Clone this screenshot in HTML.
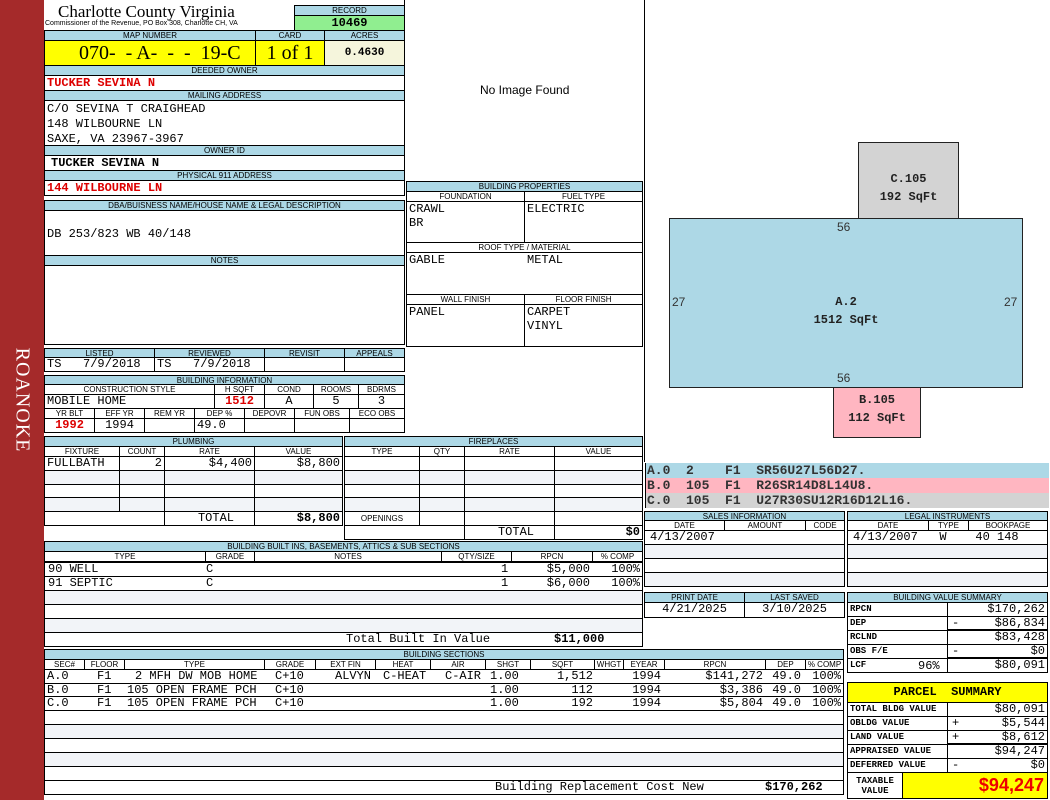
<!DOCTYPE html>
<html><head><meta charset="utf-8"><style>
*{margin:0;padding:0}
body{width:1050px;height:800px;position:relative;background:#fff;overflow:hidden;font-family:"Liberation Mono",monospace}
.b{position:absolute;box-sizing:border-box;border:1px solid #000;overflow:hidden;white-space:nowrap}
.h{background:#add8e6;font:8px/9px "Liberation Sans",sans-serif;text-align:center;color:#000}
.v{background:#fff;font:12px/13px "Liberation Mono",monospace;padding:0 2px;color:#000}
.g{background:#f2f4f8}
.r{text-align:right}
.c{text-align:center}
.t{position:absolute;white-space:nowrap}
.red{color:#d00;font-weight:bold}
.bd{font-weight:bold}
.s span{position:absolute;white-space:nowrap}
</style></head><body>
<div class="t" style="left:0;top:0;width:44px;height:800px;background:#a52a2a"></div>
<div class="t" style="left:22px;top:400px;transform:translate(-50%,-50%) rotate(90deg);color:#fff;font:20px 'Liberation Serif',serif;letter-spacing:1px">ROANOKE</div>

<div class="t" style="left:58px;top:2px;font:17px/19px 'Liberation Serif',serif">Charlotte County Virginia</div>
<div class="t" style="left:45px;top:20px;font:7px/8px 'Liberation Sans',sans-serif">Commissioner of the Revenue, PO Box 308, Charlotte CH, VA</div>
<div class="b h" style="left:294px;top:5px;width:111px;height:11px">RECORD</div>
<div class="b" style="left:294px;top:15px;width:111px;height:16px;background:#90ee90;font:bold 12px/14px 'Liberation Mono';text-align:center">10469</div>
<div class="b h" style="left:44px;top:30px;width:212px;height:11px">MAP NUMBER</div>
<div class="b h" style="left:255px;top:30px;width:70px;height:11px">CARD</div>
<div class="b h" style="left:324px;top:30px;width:81px;height:11px">ACRES</div>
<div class="b" style="left:44px;top:40px;width:212px;height:26px;background:#ff0;font:20px/24px 'Liberation Serif',serif;padding-left:34px">070- &nbsp;- A- &nbsp;- &nbsp;- &nbsp;19-C</div>
<div class="b" style="left:255px;top:40px;width:70px;height:26px;background:#ff0;font:20px/24px 'Liberation Serif',serif;text-align:center">1 of 1</div>
<div class="b" style="left:324px;top:40px;width:81px;height:26px;background:#f5f5dc;font:bold 11px/24px 'Liberation Mono';text-align:center">0.4630</div>

<div class="b h" style="left:44px;top:65px;width:361px;height:11px">DEEDED OWNER</div>
<div class="b v red" style="left:44px;top:75px;width:361px;height:16px;line-height:15px">TUCKER SEVINA N</div>
<div class="b h" style="left:44px;top:90px;width:361px;height:11px">MAILING ADDRESS</div>
<div class="b v" style="left:44px;top:100px;width:361px;height:46px;line-height:15px;padding-top:1px">C/O SEVINA T CRAIGHEAD<br>148 WILBOURNE LN<br>SAXE, VA 23967-3967</div>
<div class="b h" style="left:44px;top:145px;width:361px;height:11px">OWNER ID</div>
<div class="b v bd" style="left:44px;top:155px;width:361px;height:16px;padding-left:6px;line-height:15px">TUCKER SEVINA N</div>
<div class="b h" style="left:44px;top:170px;width:361px;height:11px">PHYSICAL 911 ADDRESS</div>
<div class="b v red" style="left:44px;top:180px;width:361px;height:16px;line-height:15px">144 WILBOURNE LN</div>
<div class="b h" style="left:44px;top:200px;width:361px;height:11px">DBA/BUISNESS NAME/HOUSE NAME &amp; LEGAL DESCRIPTION</div>
<div class="b v" style="left:44px;top:210px;width:361px;height:46px;line-height:46px">DB 253/823 WB 40/148</div>
<div class="b h" style="left:44px;top:255px;width:361px;height:11px">NOTES</div>
<div class="b v" style="left:44px;top:265px;width:361px;height:80px"></div>

<div class="b h" style="left:44px;top:348px;width:111px;height:10px">LISTED</div>
<div class="b h" style="left:154px;top:348px;width:111px;height:10px">REVIEWED</div>
<div class="b h" style="left:264px;top:348px;width:81px;height:10px">REVISIT</div>
<div class="b h" style="left:344px;top:348px;width:61px;height:10px">APPEALS</div>
<div class="b v" style="left:44px;top:357px;width:111px;height:15px">TS &nbsp;&nbsp;7/9/2018</div>
<div class="b v" style="left:154px;top:357px;width:111px;height:15px">TS &nbsp;&nbsp;7/9/2018</div>
<div class="b v" style="left:264px;top:357px;width:81px;height:15px"></div>
<div class="b v" style="left:344px;top:357px;width:61px;height:15px"></div>

<div class="b h" style="left:44px;top:375px;width:361px;height:10px">BUILDING INFORMATION</div>
<div class="b h" style="left:44px;top:384px;width:171px;height:11px;background:#fff">CONSTRUCTION STYLE</div>
<div class="b h" style="left:214px;top:384px;width:51px;height:11px;background:#fff">H SQFT</div>
<div class="b h" style="left:264px;top:384px;width:50px;height:11px;background:#fff">COND</div>
<div class="b h" style="left:313px;top:384px;width:46px;height:11px;background:#fff">ROOMS</div>
<div class="b h" style="left:358px;top:384px;width:47px;height:11px;background:#fff">BDRMS</div>
<div class="b v" style="left:44px;top:394px;width:171px;height:15px">MOBILE HOME</div>
<div class="b v red c" style="left:214px;top:394px;width:51px;height:15px">1512</div>
<div class="b v c" style="left:264px;top:394px;width:50px;height:15px">A</div>
<div class="b v c" style="left:313px;top:394px;width:46px;height:15px">5</div>
<div class="b v c" style="left:358px;top:394px;width:47px;height:15px">3</div>
<div class="b h" style="left:44px;top:408px;width:51px;height:11px;background:#fff">YR BLT</div>
<div class="b h" style="left:94px;top:408px;width:51px;height:11px;background:#fff">EFF YR</div>
<div class="b h" style="left:144px;top:408px;width:51px;height:11px;background:#fff">REM YR</div>
<div class="b h" style="left:194px;top:408px;width:51px;height:11px;background:#fff">DEP %</div>
<div class="b h" style="left:244px;top:408px;width:51px;height:11px;background:#fff">DEPOVR</div>
<div class="b h" style="left:294px;top:408px;width:56px;height:11px;background:#fff">FUN OBS</div>
<div class="b h" style="left:349px;top:408px;width:56px;height:11px;background:#fff">ECO OBS</div>
<div class="b v red c" style="left:44px;top:418px;width:51px;height:15px">1992</div>
<div class="b v c" style="left:94px;top:418px;width:51px;height:15px">1994</div>
<div class="b v" style="left:144px;top:418px;width:51px;height:15px"></div>
<div class="b v" style="left:194px;top:418px;width:51px;height:15px">49.0</div>
<div class="b v" style="left:244px;top:418px;width:51px;height:15px"></div>
<div class="b v" style="left:294px;top:418px;width:56px;height:15px"></div>
<div class="b v" style="left:349px;top:418px;width:56px;height:15px"></div>

<div class="b h" style="left:44px;top:436px;width:299px;height:11px">PLUMBING</div>
<div class="b h" style="left:44px;top:446px;width:76px;height:11px;background:#fff">FIXTURE</div>
<div class="b h" style="left:119px;top:446px;width:46px;height:11px;background:#fff">COUNT</div>
<div class="b h" style="left:164px;top:446px;width:91px;height:11px;background:#fff">RATE</div>
<div class="b h" style="left:254px;top:446px;width:89px;height:11px;background:#fff">VALUE</div>
<div class="b v" style="left:44px;top:456px;width:76px;height:15px">FULLBATH</div>
<div class="b v r" style="left:119px;top:456px;width:46px;height:15px">2</div>
<div class="b v r" style="left:164px;top:456px;width:91px;height:15px">$4,400</div>
<div class="b v r" style="left:254px;top:456px;width:89px;height:15px">$8,800</div>
<div class="b v g" style="left:44px;top:470px;width:76px;height:15px"></div><div class="b v g" style="left:119px;top:470px;width:46px;height:15px"></div><div class="b v g" style="left:164px;top:470px;width:91px;height:15px"></div><div class="b v g" style="left:254px;top:470px;width:89px;height:15px"></div>
<div class="b v" style="left:44px;top:484px;width:76px;height:14px"></div><div class="b v" style="left:119px;top:484px;width:46px;height:14px"></div><div class="b v" style="left:164px;top:484px;width:91px;height:14px"></div><div class="b v" style="left:254px;top:484px;width:89px;height:14px"></div>
<div class="b v g" style="left:44px;top:497px;width:76px;height:15px"></div><div class="b v g" style="left:119px;top:497px;width:46px;height:15px"></div><div class="b v g" style="left:164px;top:497px;width:91px;height:15px"></div><div class="b v g" style="left:254px;top:497px;width:89px;height:15px"></div>
<div class="b v" style="left:44px;top:511px;width:121px;height:15px"></div>
<div class="b v r" style="left:164px;top:511px;width:91px;height:15px;padding-right:20px">TOTAL</div>
<div class="b v r bd" style="left:254px;top:511px;width:89px;height:15px">$8,800</div>

<div class="b h" style="left:344px;top:436px;width:299px;height:11px">FIREPLACES</div>
<div class="b h" style="left:344px;top:446px;width:76px;height:11px;background:#fff">TYPE</div>
<div class="b h" style="left:419px;top:446px;width:46px;height:11px;background:#fff">QTY</div>
<div class="b h" style="left:464px;top:446px;width:91px;height:11px;background:#fff">RATE</div>
<div class="b h" style="left:554px;top:446px;width:89px;height:11px;background:#fff">VALUE</div>
<div class="b v" style="left:344px;top:456px;width:76px;height:15px"></div><div class="b v" style="left:419px;top:456px;width:46px;height:15px"></div><div class="b v" style="left:464px;top:456px;width:91px;height:15px"></div><div class="b v" style="left:554px;top:456px;width:89px;height:15px"></div>
<div class="b v g" style="left:344px;top:470px;width:76px;height:15px"></div><div class="b v g" style="left:419px;top:470px;width:46px;height:15px"></div><div class="b v g" style="left:464px;top:470px;width:91px;height:15px"></div><div class="b v g" style="left:554px;top:470px;width:89px;height:15px"></div>
<div class="b v" style="left:344px;top:484px;width:76px;height:14px"></div><div class="b v" style="left:419px;top:484px;width:46px;height:14px"></div><div class="b v" style="left:464px;top:484px;width:91px;height:14px"></div><div class="b v" style="left:554px;top:484px;width:89px;height:14px"></div>
<div class="b v g" style="left:344px;top:497px;width:76px;height:15px"></div><div class="b v g" style="left:419px;top:497px;width:46px;height:15px"></div><div class="b v g" style="left:464px;top:497px;width:91px;height:15px"></div><div class="b v g" style="left:554px;top:497px;width:89px;height:15px"></div>
<div class="b h" style="left:344px;top:511px;width:76px;height:15px;background:#fff;line-height:13px">OPENINGS</div><div class="b v" style="left:419px;top:511px;width:46px;height:15px"></div><div class="b v" style="left:464px;top:511px;width:91px;height:15px"></div><div class="b v" style="left:554px;top:511px;width:89px;height:15px"></div>
<div class="b v" style="left:344px;top:525px;width:121px;height:15px"></div>
<div class="b v r" style="left:464px;top:525px;width:91px;height:15px;padding-right:20px">TOTAL</div>
<div class="b v r bd" style="left:554px;top:525px;width:89px;height:15px">$0</div>

<div class="b h" style="left:44px;top:541px;width:599px;height:11px">BUILDING BUILT INS, BASEMENTS, ATTICS &amp; SUB SECTIONS</div>
<div class="b h" style="left:44px;top:551px;width:162px;height:11px;background:#fff">TYPE</div>
<div class="b h" style="left:205px;top:551px;width:50px;height:11px;background:#fff">GRADE</div>
<div class="b h" style="left:254px;top:551px;width:188px;height:11px;background:#fff">NOTES</div>
<div class="b h" style="left:441px;top:551px;width:71px;height:11px;background:#fff">QTY/SIZE</div>
<div class="b h" style="left:511px;top:551px;width:82px;height:11px;background:#fff">RPCN</div>
<div class="b h" style="left:592px;top:551px;width:51px;height:11px;background:#fff">% COMP</div>
<div class="b v s" style="left:44px;top:562px;width:599px;height:15px"><span style="left:3px">90 WELL</span><span style="left:161px">C</span><span style="left:456px">1</span><span style="right:52px">$5,000</span><span style="right:2px">100%</span></div>
<div class="b v s" style="left:44px;top:576px;width:599px;height:15px"><span style="left:3px">91 SEPTIC</span><span style="left:161px">C</span><span style="left:456px">1</span><span style="right:52px">$6,000</span><span style="right:2px">100%</span></div>
<div class="b v g" style="left:44px;top:590px;width:599px;height:15px"></div>
<div class="b v" style="left:44px;top:604px;width:599px;height:15px"></div>
<div class="b v g" style="left:44px;top:618px;width:599px;height:15px"></div>
<div class="b v s" style="left:44px;top:632px;width:599px;height:15px"><span style="left:301px">Total Built In Value</span><span class="bd" style="left:509px">$11,000</span></div>

<div class="b h" style="left:44px;top:649px;width:800px;height:11px">BUILDING SECTIONS</div>
<div class="b h" style="left:44px;top:659px;width:41px;height:11px;background:#fff">SEC#</div>
<div class="b h" style="left:84px;top:659px;width:41px;height:11px;background:#fff">FLOOR</div>
<div class="b h" style="left:124px;top:659px;width:141px;height:11px;background:#fff">TYPE</div>
<div class="b h" style="left:264px;top:659px;width:52px;height:11px;background:#fff">GRADE</div>
<div class="b h" style="left:315px;top:659px;width:61px;height:11px;background:#fff">EXT FIN</div>
<div class="b h" style="left:375px;top:659px;width:56px;height:11px;background:#fff">HEAT</div>
<div class="b h" style="left:430px;top:659px;width:56px;height:11px;background:#fff">AIR</div>
<div class="b h" style="left:485px;top:659px;width:46px;height:11px;background:#fff">SHGT</div>
<div class="b h" style="left:530px;top:659px;width:65px;height:11px;background:#fff">SQFT</div>
<div class="b h" style="left:594px;top:659px;width:30px;height:11px;background:#fff">WHGT</div>
<div class="b h" style="left:623px;top:659px;width:42px;height:11px;background:#fff">EYEAR</div>
<div class="b h" style="left:664px;top:659px;width:102px;height:11px;background:#fff">RPCN</div>
<div class="b h" style="left:765px;top:659px;width:41px;height:11px;background:#fff">DEP</div>
<div class="b h" style="left:805px;top:659px;width:39px;height:11px;background:#fff">% COMP</div>
<div class="b v s" style="left:44px;top:669px;width:800px;height:15px"><span style="left:2px">A.0</span><span style="left:52px">F1</span><span style="left:90px">2 MFH DW MOB HOME</span><span style="left:230px">C+10</span><span style="left:290px">ALVYN</span><span style="left:338px">C-HEAT</span><span style="left:400px">C-AIR</span><span style="left:445px">1.00</span><span style="right:250px">1,512</span><span style="right:182px">1994</span><span style="right:80px">$141,272</span><span style="right:42px">49.0</span><span style="right:2px">100%</span></div>
<div class="b v s" style="left:44px;top:683px;width:800px;height:14px"><span style="left:2px">B.0</span><span style="left:52px">F1</span><span style="left:82px">105 OPEN FRAME PCH</span><span style="left:230px">C+10</span><span style="left:445px">1.00</span><span style="right:250px">112</span><span style="right:182px">1994</span><span style="right:80px">$3,386</span><span style="right:42px">49.0</span><span style="right:2px">100%</span></div>
<div class="b v s" style="left:44px;top:696px;width:800px;height:15px"><span style="left:2px">C.0</span><span style="left:52px">F1</span><span style="left:82px">105 OPEN FRAME PCH</span><span style="left:230px">C+10</span><span style="left:445px">1.00</span><span style="right:250px">192</span><span style="right:182px">1994</span><span style="right:80px">$5,804</span><span style="right:42px">49.0</span><span style="right:2px">100%</span></div>
<div class="b v" style="left:44px;top:710px;width:800px;height:15px"></div>
<div class="b v g" style="left:44px;top:724px;width:800px;height:15px"></div>
<div class="b v" style="left:44px;top:738px;width:800px;height:15px"></div>
<div class="b v g" style="left:44px;top:752px;width:800px;height:15px"></div>
<div class="b v" style="left:44px;top:766px;width:800px;height:15px"></div>
<div class="b v s" style="left:44px;top:780px;width:800px;height:15px"><span style="left:450px">Building Replacement Cost New</span><span class="bd" style="left:720px">$170,262</span></div>

<div class="t" style="left:404px;top:0;width:1px;height:182px;background:#000"></div>
<div class="t" style="left:644px;top:0;width:1px;height:462px;background:#000"></div>
<div class="t" style="left:480px;top:83px;font:12px 'Liberation Sans',sans-serif">No Image Found</div>

<div class="b h" style="left:406px;top:181px;width:237px;height:11px">BUILDING PROPERTIES</div>
<div class="b h" style="left:406px;top:191px;width:119px;height:11px;background:#fff">FOUNDATION</div>
<div class="b h" style="left:524px;top:191px;width:119px;height:11px;background:#fff">FUEL TYPE</div>
<div class="b v" style="left:406px;top:201px;width:119px;height:42px;line-height:14px">CRAWL<br>BR</div>
<div class="b v" style="left:524px;top:201px;width:119px;height:42px;line-height:14px">ELECTRIC</div>
<div class="b h" style="left:406px;top:242px;width:237px;height:11px;background:#fff">ROOF TYPE / MATERIAL</div>
<div class="b v" style="left:406px;top:252px;width:237px;height:43px;line-height:14px">GABLE<span class="t" style="left:120px">METAL</span></div>
<div class="b h" style="left:406px;top:294px;width:119px;height:11px;background:#fff">WALL FINISH</div>
<div class="b h" style="left:524px;top:294px;width:119px;height:11px;background:#fff">FLOOR FINISH</div>
<div class="b v" style="left:406px;top:304px;width:119px;height:43px;line-height:14px">PANEL</div>
<div class="b v" style="left:524px;top:304px;width:119px;height:43px;line-height:14px">CARPET<br>VINYL</div>

<div class="t" style="left:858px;top:142px;width:101px;height:77px;box-sizing:border-box;border:1px solid #222;background:#d3d3d3"></div>
<div class="t" style="left:669px;top:218px;width:354px;height:170px;box-sizing:border-box;border:1px solid #222;background:#add8e6"></div>
<div class="t" style="left:833px;top:387px;width:88px;height:51px;box-sizing:border-box;border:1px solid #222;background:#ffb6c1"></div>
<div class="t c" style="left:858px;top:170px;width:101px;font:bold 12px/18px 'Liberation Mono';color:#222">C.105<br>192 SqFt</div>
<div class="t c" style="left:669px;top:293px;width:354px;font:bold 12px/18px 'Liberation Mono';color:#222">A.2<br>1512 SqFt</div>
<div class="t c" style="left:833px;top:391px;width:88px;font:bold 12px/18px 'Liberation Mono';color:#222">B.105<br>112 SqFt</div>
<div class="t" style="left:837px;top:220px;font:12px 'Liberation Sans';color:#333">56</div>
<div class="t" style="left:837px;top:371px;font:12px 'Liberation Sans';color:#333">56</div>
<div class="t" style="left:672px;top:295px;font:12px 'Liberation Sans';color:#333">27</div>
<div class="t" style="left:1004px;top:295px;font:12px 'Liberation Sans';color:#333">27</div>

<div class="t" style="left:645px;top:463px;width:403px;height:15px;background:#add8e6;border-left:1px solid #000"></div>
<div class="t" style="left:645px;top:478px;width:403px;height:15px;background:#ffb6c1;border-left:1px solid #000"></div>
<div class="t" style="left:645px;top:493px;width:403px;height:15px;background:#d3d3d3;border-left:1px solid #000"></div>
<div class="t" style="left:647px;top:463px;font:bold 13px/15px 'Liberation Mono';color:#333">A.0 &nbsp;2 &nbsp;&nbsp;&nbsp;F1 &nbsp;SR56U27L56D27.</div>
<div class="t" style="left:647px;top:478px;font:bold 13px/15px 'Liberation Mono';color:#333">B.0 &nbsp;105 &nbsp;F1 &nbsp;R26SR14D8L14U8.</div>
<div class="t" style="left:647px;top:493px;font:bold 13px/15px 'Liberation Mono';color:#333">C.0 &nbsp;105 &nbsp;F1 &nbsp;U27R30SU12R16D12L16.</div>

<div class="b h" style="left:644px;top:511px;width:201px;height:10px">SALES INFORMATION</div>
<div class="b h" style="left:644px;top:520px;width:81px;height:11px;background:#fff">DATE</div>
<div class="b h" style="left:724px;top:520px;width:82px;height:11px;background:#fff">AMOUNT</div>
<div class="b h" style="left:805px;top:520px;width:40px;height:11px;background:#fff">CODE</div>
<div class="b v" style="left:644px;top:530px;width:201px;height:15px;padding-left:5px">4/13/2007</div>
<div class="b v g" style="left:644px;top:544px;width:201px;height:15px"></div>
<div class="b v" style="left:644px;top:558px;width:201px;height:15px"></div>
<div class="b v g" style="left:644px;top:572px;width:201px;height:15px"></div>
<div class="b h" style="left:847px;top:511px;width:201px;height:10px">LEGAL INSTRUMENTS</div>
<div class="b h" style="left:847px;top:520px;width:82px;height:11px;background:#fff">DATE</div>
<div class="b h" style="left:928px;top:520px;width:41px;height:11px;background:#fff">TYPE</div>
<div class="b h" style="left:968px;top:520px;width:80px;height:11px;background:#fff">BOOKPAGE</div>
<div class="b v" style="left:847px;top:530px;width:201px;height:15px;padding-left:5px">4/13/2007 &nbsp;&nbsp;W &nbsp;&nbsp;&nbsp;40 148</div>
<div class="b v g" style="left:847px;top:544px;width:201px;height:15px"></div>
<div class="b v" style="left:847px;top:558px;width:201px;height:15px"></div>
<div class="b v g" style="left:847px;top:572px;width:201px;height:15px"></div>
<div class="b h" style="left:644px;top:592px;width:101px;height:11px">PRINT DATE</div>
<div class="b h" style="left:744px;top:592px;width:101px;height:11px">LAST SAVED</div>
<div class="b v c" style="left:644px;top:602px;width:101px;height:16px">4/21/2025</div>
<div class="b v c" style="left:744px;top:602px;width:101px;height:16px">3/10/2025</div>
<div class="b h" style="left:847px;top:592px;width:201px;height:11px">BUILDING VALUE SUMMARY</div>
<div class="b v bd" style="left:847px;top:602px;width:101px;height:15px;font-size:9px">RPCN</div><div class="b v r" style="left:947px;top:602px;width:101px;height:15px">$170,262</div>
<div class="b v bd" style="left:847px;top:616px;width:101px;height:15px;font-size:9px">DEP</div><div class="b v r" style="left:947px;top:616px;width:101px;height:15px;border-bottom:2px solid #000"><span class="t" style="left:4px">-</span>$86,834</div>
<div class="b v bd" style="left:847px;top:630px;width:101px;height:15px;font-size:9px">RCLND</div><div class="b v r" style="left:947px;top:630px;width:101px;height:15px">$83,428</div>
<div class="b v bd" style="left:847px;top:644px;width:101px;height:15px;font-size:9px">OBS F/E</div><div class="b v r" style="left:947px;top:644px;width:101px;height:15px;border-bottom:2px solid #000"><span class="t" style="left:4px">-</span>$0</div>
<div class="b v bd" style="left:847px;top:658px;width:101px;height:15px;font-size:9px">LCF<span class="t" style="left:70px;font:12px 'Liberation Mono'">96%</span></div><div class="b v r" style="left:947px;top:658px;width:101px;height:15px">$80,091</div>
<div class="b" style="left:847px;top:682px;width:201px;height:21px;background:#ff0;font:bold 12px/19px 'Liberation Mono';text-align:center">PARCEL &nbsp;SUMMARY</div>
<div class="b v bd" style="left:847px;top:702px;width:101px;height:15px;font-size:9px">TOTAL BLDG VALUE</div><div class="b v r" style="left:947px;top:702px;width:101px;height:15px">$80,091</div>
<div class="b v bd" style="left:847px;top:716px;width:101px;height:15px;font-size:9px">OBLDG VALUE</div><div class="b v r" style="left:947px;top:716px;width:101px;height:15px"><span class="t" style="left:4px">+</span>$5,544</div>
<div class="b v bd" style="left:847px;top:730px;width:101px;height:15px;font-size:9px">LAND VALUE</div><div class="b v r" style="left:947px;top:730px;width:101px;height:15px;border-bottom:2px solid #000"><span class="t" style="left:4px">+</span>$8,612</div>
<div class="b v bd" style="left:847px;top:744px;width:101px;height:15px;font-size:9px">APPRAISED VALUE</div><div class="b v r" style="left:947px;top:744px;width:101px;height:15px">$94,247</div>
<div class="b v bd" style="left:847px;top:758px;width:101px;height:15px;font-size:9px">DEFERRED VALUE</div><div class="b v r" style="left:947px;top:758px;width:101px;height:15px"><span class="t" style="left:4px">-</span>$0</div>
<div class="b v bd c" style="left:847px;top:772px;width:56px;height:27px;font-size:9px;line-height:10px;padding-top:3px">TAXABLE<br>VALUE</div>
<div class="b r" style="left:902px;top:772px;width:146px;height:27px;background:#ff0;color:#e00;font:bold 18px/25px 'Liberation Sans',sans-serif;padding-right:3px">$94,247</div>
</body></html>
